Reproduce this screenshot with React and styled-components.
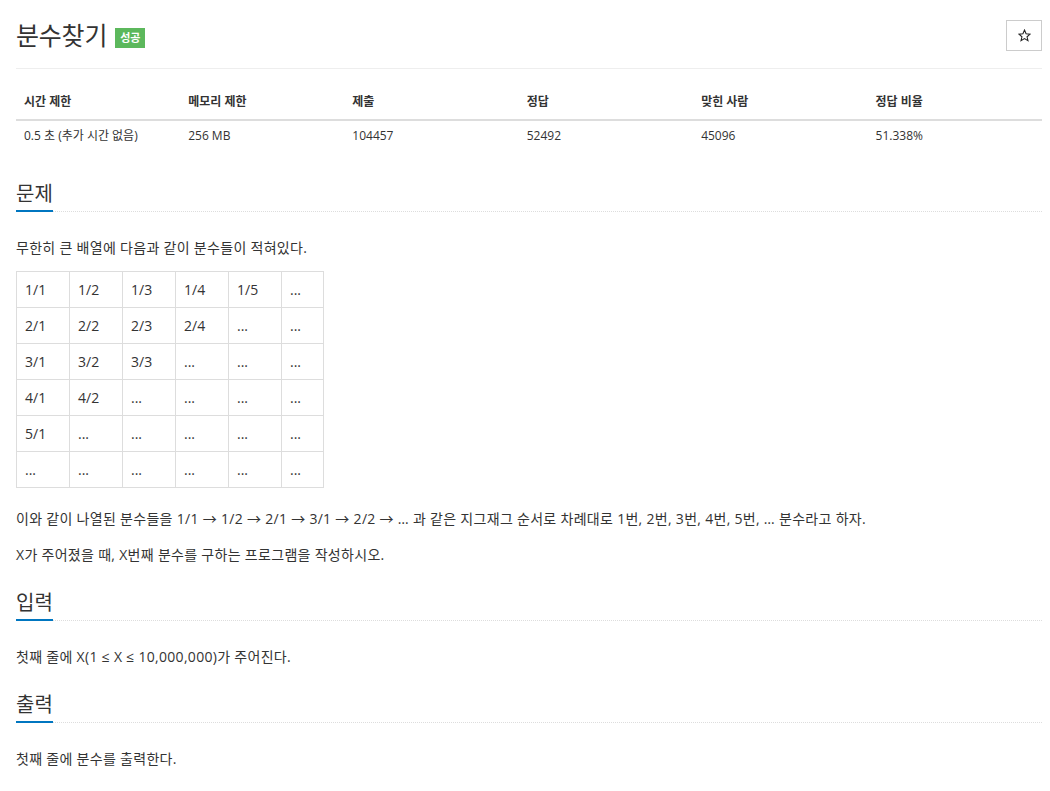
import styled, { createGlobalStyle } from "styled-components";

const GlobalStyle = createGlobalStyle`
  body {
    margin: 0;
    background: #fff;
    color: #333;
    font-family: "Open Sans", "Noto Sans CJK KR", sans-serif;
    font-size: 14px;
  }
`;

const Page = styled.div`
  padding: 0 8px 40px 16px;
`;

const Header = styled.div`
  display: flex;
  align-items: center;
  justify-content: space-between;
  padding: 20px 0 17px;
  border-bottom: 1px solid #eee;
`;

const TitleGroup = styled.div`
  display: flex;
  align-items: center;
`;

const Title = styled.h1`
  margin: 0;
  font-size: 25px;
  font-weight: 400;
  line-height: 31px;
  letter-spacing: -0.2px;
  color: #333;
`;

const Badge = styled.span`
  margin-left: 8px;
  margin-top: 4px;
  padding: 0 5px;
  height: 20px;
  line-height: 20px;
  background: #5cb85c;
  color: #fff;
  font-size: 11px;
  font-weight: 700;
`;

const StarButton = styled.button`
  display: flex;
  align-items: center;
  justify-content: center;
  width: 36px;
  height: 31px;
  padding: 0;
  background: #fff;
  border: 1px solid #ccc;
  cursor: pointer;
`;

const StatTable = styled.table`
  width: 100%;
  margin-top: 16px;
  border-collapse: collapse;
  font-size: 12px;
`;

const StatHead = styled.th`
  width: ${(p) => p.$w};
  padding: 8px;
  line-height: 18px;
  text-align: left;
  font-weight: 700;
  border-bottom: 2px solid #ddd;
`;

const StatCell = styled.td`
  padding: 6px 8px;
  line-height: 18px;
`;

const Headline = styled.h2`
  margin: ${(p) => p.$top || "24px"} 0 0;
  font-size: 20px;
  font-weight: 400;
  line-height: 22px;
  border-bottom: 1px dotted #ddd;
`;

const HeadText = styled.span`
  display: inline-block;
  padding: 3px 0 5px;
  margin-bottom: -1px;
  border-bottom: 2px solid #0076c0;
`;

const Para = styled.p`
  margin: ${(p) => p.$m || "0 0 15px"};
  line-height: 21px;
  letter-spacing: 0.3px;
`;

const FracTable = styled.table`
  border-collapse: collapse;
  table-layout: fixed;
  margin: 0 0 20px;
`;

const FracCell = styled.td`
  width: ${(p) => (p.$narrow ? "25px" : "36px")};
  padding: 7px 8px;
  line-height: 21px;
  border: 1px solid #ddd;
`;

const stats = [
  ["시간 제한", "0.5 초 (추가 시간 없음)", "16%"],
  ["메모리 제한", "256 MB", "16%"],
  ["제출", "104457", "17%"],
  ["정답", "52492", "17%"],
  ["맞힌 사람", "45096", "17%"],
  ["정답 비율", "51.338%", "17%"],
];

const grid = [
  ["1/1", "1/2", "1/3", "1/4", "1/5", "..."],
  ["2/1", "2/2", "2/3", "2/4", "...", "..."],
  ["3/1", "3/2", "3/3", "...", "...", "..."],
  ["4/1", "4/2", "...", "...", "...", "..."],
  ["5/1", "...", "...", "...", "...", "..."],
  ["...", "...", "...", "...", "...", "..."],
];

const StarIcon = () => (
  <svg width="13" height="13" viewBox="0 0 24 24" aria-hidden="true">
    <polygon
      points="12,2 14.9,8.9 22.3,9.5 16.7,14.4 18.4,21.6 12,17.8 5.6,21.6 7.3,14.4 1.7,9.5 9.1,8.9"
      fill="none"
      stroke="#222"
      strokeWidth="2"
      strokeLinejoin="miter"
    />
  </svg>
);

export default function App() {
  return (
    <Page>
      <GlobalStyle />
      <Header>
        <TitleGroup>
          <Title>분수찾기</Title>
          <Badge>성공</Badge>
        </TitleGroup>
        <StarButton title="즐겨찾기">
          <StarIcon />
        </StarButton>
      </Header>

      <StatTable>
        <thead>
          <tr>
            {stats.map(([h, , w]) => (
              <StatHead key={h} $w={w}>
                {h}
              </StatHead>
            ))}
          </tr>
        </thead>
        <tbody>
          <tr>
            {stats.map(([h, v]) => (
              <StatCell key={h}>{v}</StatCell>
            ))}
          </tr>
        </tbody>
      </StatTable>

      <Headline $top="29px">
        <HeadText>문제</HeadText>
      </Headline>
      <Para $m="25px 0 13px">무한히 큰 배열에 다음과 같이 분수들이 적혀있다.</Para>
      <FracTable>
        <tbody>
          {grid.map((row, i) => (
            <tr key={i}>
              {row.map((c, j) => (
                <FracCell key={j} $narrow={j === 5}>
                  {c}
                </FracCell>
              ))}
            </tr>
          ))}
        </tbody>
      </FracTable>
      <Para>
        이와 같이 나열된 분수들을 1/1 → 1/2 → 2/1 → 3/1 → 2/2 → … 과 같은
        지그재그 순서로 차례대로 1번, 2번, 3번, 4번, 5번, … 분수라고 하자.
      </Para>
      <Para $m="0">X가 주어졌을 때, X번째 분수를 구하는 프로그램을 작성하시오.</Para>

      <Headline>
        <HeadText>입력</HeadText>
      </Headline>
      <Para $m="25px 0 0">첫째 줄에 X(1 ≤ X ≤ 10,000,000)가 주어진다.</Para>

      <Headline>
        <HeadText>출력</HeadText>
      </Headline>
      <Para $m="25px 0 0">첫째 줄에 분수를 출력한다.</Para>
    </Page>
  );
}
